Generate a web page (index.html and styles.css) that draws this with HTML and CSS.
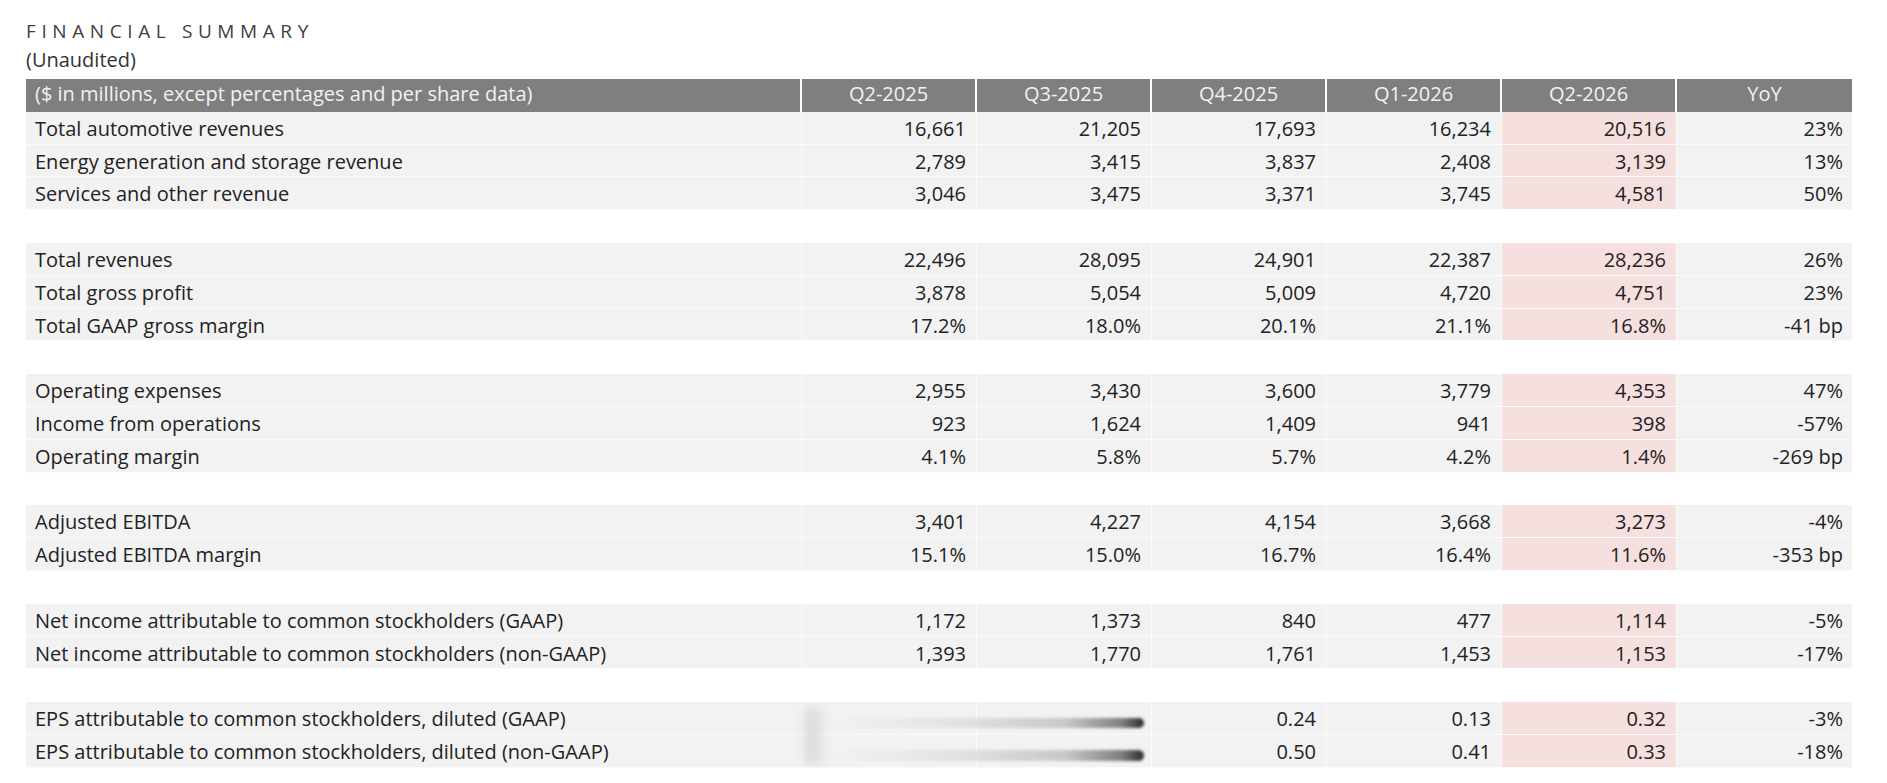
FILE: index.html
```html
<!DOCTYPE html>
<html lang="en">
<head>
<meta charset="utf-8">
<title>Financial Summary</title>
<link rel="stylesheet" href="styles.css">
</head>
<body>
<div class="page">
  <div class="title">FINANCIAL SUMMARY</div>
  <div class="subtitle">(Unaudited)</div>

  <div class="table">
    <div class="grid head">
      <div class="cell label">($ in millions, except percentages and per share data)</div>
      <div class="cell">Q2-2025</div>
      <div class="cell">Q3-2025</div>
      <div class="cell">Q4-2025</div>
      <div class="cell">Q1-2026</div>
      <div class="cell">Q2-2026</div>
      <div class="cell">YoY</div>
    </div>

    <div class="grid group">
      <div class="cell label">Total automotive revenues</div><div class="cell">16,661</div><div class="cell">21,205</div><div class="cell">17,693</div><div class="cell">16,234</div><div class="cell hl">20,516</div><div class="cell">23%</div>
      <div class="cell label">Energy generation and storage revenue</div><div class="cell">2,789</div><div class="cell">3,415</div><div class="cell">3,837</div><div class="cell">2,408</div><div class="cell hl">3,139</div><div class="cell">13%</div>
      <div class="cell label">Services and other revenue</div><div class="cell">3,046</div><div class="cell">3,475</div><div class="cell">3,371</div><div class="cell">3,745</div><div class="cell hl">4,581</div><div class="cell">50%</div>
    </div>

    <div class="grid group spaced">
      <div class="cell label">Total revenues</div><div class="cell">22,496</div><div class="cell">28,095</div><div class="cell">24,901</div><div class="cell">22,387</div><div class="cell hl">28,236</div><div class="cell">26%</div>
      <div class="cell label">Total gross profit</div><div class="cell">3,878</div><div class="cell">5,054</div><div class="cell">5,009</div><div class="cell">4,720</div><div class="cell hl">4,751</div><div class="cell">23%</div>
      <div class="cell label">Total GAAP gross margin</div><div class="cell">17.2%</div><div class="cell">18.0%</div><div class="cell">20.1%</div><div class="cell">21.1%</div><div class="cell hl">16.8%</div><div class="cell">-41 bp</div>
    </div>

    <div class="grid group spaced">
      <div class="cell label">Operating expenses</div><div class="cell">2,955</div><div class="cell">3,430</div><div class="cell">3,600</div><div class="cell">3,779</div><div class="cell hl">4,353</div><div class="cell">47%</div>
      <div class="cell label">Income from operations</div><div class="cell">923</div><div class="cell">1,624</div><div class="cell">1,409</div><div class="cell">941</div><div class="cell hl">398</div><div class="cell">-57%</div>
      <div class="cell label">Operating margin</div><div class="cell">4.1%</div><div class="cell">5.8%</div><div class="cell">5.7%</div><div class="cell">4.2%</div><div class="cell hl">1.4%</div><div class="cell">-269 bp</div>
    </div>

    <div class="grid group spaced">
      <div class="cell label">Adjusted EBITDA</div><div class="cell">3,401</div><div class="cell">4,227</div><div class="cell">4,154</div><div class="cell">3,668</div><div class="cell hl">3,273</div><div class="cell">-4%</div>
      <div class="cell label">Adjusted EBITDA margin</div><div class="cell">15.1%</div><div class="cell">15.0%</div><div class="cell">16.7%</div><div class="cell">16.4%</div><div class="cell hl">11.6%</div><div class="cell">-353 bp</div>
    </div>

    <div class="grid group spaced">
      <div class="cell label">Net income attributable to common stockholders (GAAP)</div><div class="cell">1,172</div><div class="cell">1,373</div><div class="cell">840</div><div class="cell">477</div><div class="cell hl">1,114</div><div class="cell">-5%</div>
      <div class="cell label">Net income attributable to common stockholders (non-GAAP)</div><div class="cell">1,393</div><div class="cell">1,770</div><div class="cell">1,761</div><div class="cell">1,453</div><div class="cell hl">1,153</div><div class="cell">-17%</div>
    </div>

    <div class="grid group spaced eps">
      <div class="cell label">EPS attributable to common stockholders, diluted (GAAP)</div><div class="cell"></div><div class="cell"></div><div class="cell">0.24</div><div class="cell">0.13</div><div class="cell hl">0.32</div><div class="cell">-3%</div>
      <div class="cell label">EPS attributable to common stockholders, diluted (non-GAAP)</div><div class="cell"></div><div class="cell"></div><div class="cell">0.50</div><div class="cell">0.41</div><div class="cell hl">0.33</div><div class="cell">-18%</div>
      <div class="smear" aria-hidden="true">
        <div class="blob"></div>
        <div class="streak s1"></div>
        <div class="streak s2"></div>
      </div>
    </div>
  </div>
</div>
</body>
</html>
```
FILE: styles.css
```css
html, body {
  margin: 0;
  padding: 0;
  background: #ffffff;
}

body {
  font-family: "Open Sans", Lato, "Liberation Sans", sans-serif;
  color: #222222;
}

.page {
  padding: 19px 0 0 26px;
}

.title {
  font-size: 19px;
  line-height: 24px;
  letter-spacing: 5.6px;
  color: #404040;
}

.subtitle {
  margin-top: 4px;
  font-size: 20px;
  line-height: 25px;
  color: #333333;
}

.table {
  margin-top: 7px;
  width: 1826px;
}

.grid {
  display: grid;
  grid-template-columns: 776px repeat(6, 175px);
}

.cell {
  box-sizing: border-box;
  height: 32.8px;
  padding: 2px 10px 0 10px;
  line-height: 30.8px;
  font-size: 20px;
  text-align: right;
  white-space: nowrap;
  background: #f2f2f2;
  border-right: 1px solid #fbfbfb;
  border-bottom: 1px solid #fbfbfb;
}

.cell.label {
  text-align: left;
  padding-left: 9px;
}

.cell:nth-child(7n) {
  border-right: none;
  padding-right: 9px;
}

.cell.hl {
  background: #f5dfdf;
}

.head .cell {
  background: #7f7f7f;
  color: #f2f2f2;
  text-align: center;
  border-right: 2px solid #ffffff;
  border-bottom: none;
  padding-top: 0;
  padding-left: 0;
  padding-right: 0;
}

.head .cell.label {
  text-align: left;
  padding-left: 9px;
}

.head .cell:last-child {
  border-right: none;
}

.group.spaced {
  margin-top: 32.8px;
}

.eps {
  position: relative;
}

.smear {
  position: absolute;
  left: 767px;
  top: 0;
  width: 360px;
  height: 66px;
  pointer-events: none;
}

.blob {
  position: absolute;
  left: 6px;
  top: 6px;
  width: 26px;
  height: 56px;
  background: linear-gradient(90deg, rgba(190,190,190,0) 0%, rgba(190,190,190,0.5) 50%, rgba(200,200,200,0.15) 100%);
  filter: blur(4px);
}

.streak {
  position: absolute;
  left: 40px;
  width: 311px;
  height: 10px;
  border-radius: 0 6px 6px 0;
  background: linear-gradient(90deg, rgba(210,210,210,0) 0%, rgba(210,210,210,0.5) 40%, rgba(185,185,185,0.75) 75%, rgba(120,120,120,0.95) 93%, #2a2a2a 100%);
  filter: blur(1.5px);
}

.s1 {
  top: 16px;
}

.s2 {
  top: 48px;
  height: 11px;
}
```
